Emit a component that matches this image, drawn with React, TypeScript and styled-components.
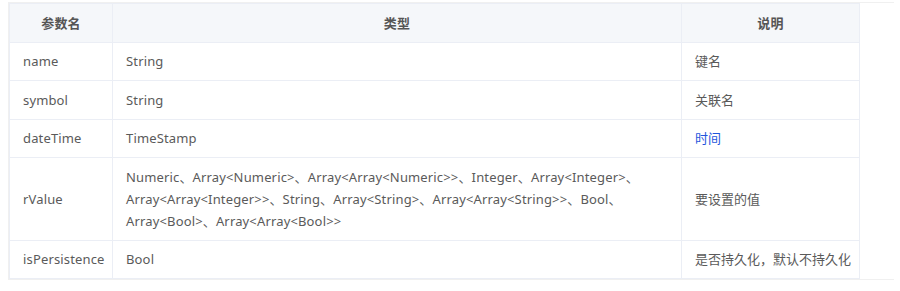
import styled, { createGlobalStyle } from "styled-components";

const GlobalStyle = createGlobalStyle`
  body {
    margin: 0;
    background: #fff;
    font-family: "Noto Sans", "Noto Sans CJK SC", sans-serif;
  }
`;

const Wrapper = styled.div`
  margin: 2px 0 0 8px;
  width: 885px;
  border-top: 1px solid #f0f0f0;
  border-bottom: 1px solid #f0f0f0;
  border-left: 1px solid #f0f0f0;
`;

const Table = styled.table`
  border-collapse: collapse;
  table-layout: fixed;
  width: 850px;
  font-size: 13px;
  letter-spacing: 0.15px;
  color: #555;
`;

const HeadCell = styled.th<{ $width: number }>`
  box-sizing: border-box;
  width: ${(p) => p.$width}px;
  background: #f5f7fa;
  border: 1px solid #ebeef5;
  padding: 7.75px 13px;
  line-height: 22px;
  font-weight: 600;
  color: #555;
  text-align: center;
`;

const Cell = styled.td<{ $link?: boolean }>`
  box-sizing: border-box;
  border: 1px solid #ebeef5;
  padding: 7.75px 8px 7.75px 13px;
  line-height: 22px;
  text-align: left;
  vertical-align: middle;
  color: ${(p) => (p.$link ? "#1f55dc" : "#5a5a5a")};
`;

const DescCell = styled(Cell)`
  white-space: nowrap;
  letter-spacing: 0;
`;

const rows = [
  { name: "name", type: "String", desc: "键名" },
  { name: "symbol", type: "String", desc: "关联名" },
  { name: "dateTime", type: "TimeStamp", desc: "时间", link: true },
  {
    name: "rValue",
    type: "Numeric、Array<Numeric>、Array<Array<Numeric>>、Integer、Array<Integer>、Array<Array<Integer>>、String、Array<String>、Array<Array<String>>、Bool、Array<Bool>、Array<Array<Bool>>",
    desc: "要设置的值",
  },
  { name: "isPersistence", type: "Bool", desc: "是否持久化，默认不持久化" },
];

export default function App() {
  return (
    <>
      <GlobalStyle />
      <Wrapper>
        <Table>
          <thead>
            <tr>
              <HeadCell $width={103}>参数名</HeadCell>
              <HeadCell $width={569}>类型</HeadCell>
              <HeadCell $width={178}>说明</HeadCell>
            </tr>
          </thead>
          <tbody>
            {rows.map((r) => (
              <tr key={r.name}>
                <Cell>{r.name}</Cell>
                <Cell>{r.type}</Cell>
                <DescCell $link={r.link}>{r.desc}</DescCell>
              </tr>
            ))}
          </tbody>
        </Table>
      </Wrapper>
    </>
  );
}
